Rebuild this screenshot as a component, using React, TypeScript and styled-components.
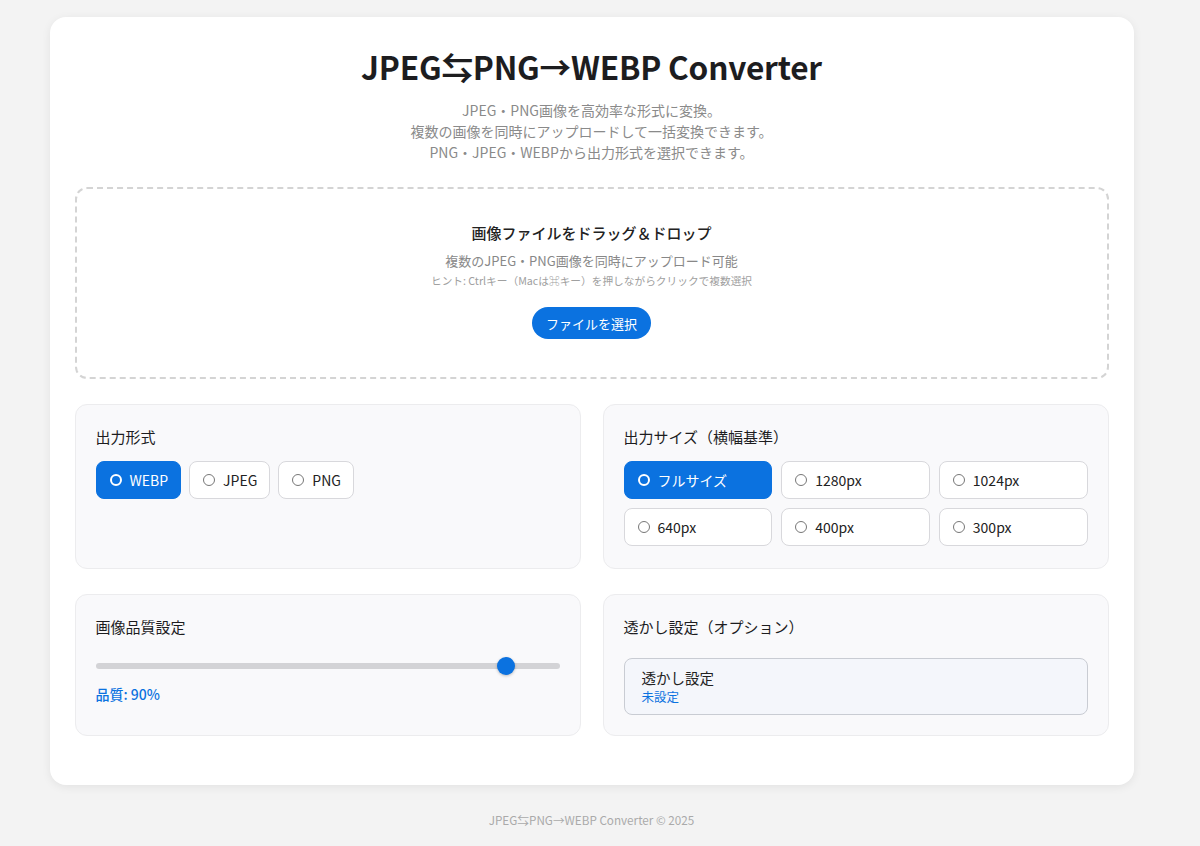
import React, { useState } from "react";
import styled, { createGlobalStyle } from "styled-components";

const BLUE = "#0b72e0";

const GlobalStyle = createGlobalStyle`
  html, body { margin: 0; padding: 0; background: #f3f3f3; }
  body {
    font-family: "Noto Sans CJK JP", "Noto Sans", sans-serif;
    color: #222;
  }
  * { box-sizing: border-box; }
`;

const Page = styled.div`
  width: 1183px;
  padding-top: 17px;
`;

const Card = styled.main`
  width: 1084px;
  margin: 0 auto;
  background: #fff;
  border-radius: 16px;
  box-shadow: 0 2px 10px rgba(0, 0, 0, 0.07);
  padding: 28px 25px 49px;
`;

const Header = styled.header`
  display: flex;
  flex-direction: column;
  align-items: center;
  text-align: center;
`;

const Title = styled.h1`
  margin: 0;
  font-size: 31.6px;
  font-weight: 700;
  line-height: 42px;
  color: #1d1d1f;
  letter-spacing: -0.2px;
`;

const Subtitle = styled.p`
  margin: 13px 0 0;
  font-size: 14px;
  line-height: 21px;
  color: #8a8a8a;
`;

const DropZone = styled.section`
  margin-top: 24px;
  height: 192px;
  border: 2px dashed #d4d4d4;
  border-radius: 12px;
  padding-bottom: 5px;
  display: flex;
  flex-direction: column;
  align-items: center;
  justify-content: center;
  text-align: center;
`;

const DropTitle = styled.div`
  font-size: 15px;
  font-weight: 500;
  color: #222;
  line-height: 22px;
`;

const DropText = styled.div`
  margin-top: 7px;
  font-size: 13px;
  color: #888;
  line-height: 20px;
`;

const DropHint = styled.div`
  margin-top: 2px;
  font-size: 10.7px;
  color: #a0a0a0;
  line-height: 16px;
`;

const SelectButton = styled.button`
  margin-top: 18px;
  height: 32px;
  padding: 0 14px;
  border: none;
  border-radius: 16px;
  background: ${BLUE};
  color: #fff;
  font-family: inherit;
  font-size: 13px;
  font-weight: 400;
`;

const Grid = styled.div`
  margin-top: 25px;
  display: grid;
  grid-template-columns: 1fr 1fr;
  column-gap: 22px;
  row-gap: 25px;
`;

const Panel = styled.section<{ $h: number }>`
  height: ${(p) => p.$h}px;
  background: #f9f9fb;
  border: 1px solid #ececee;
  border-radius: 12px;
  padding: 21px 20px 20px;
`;

const PanelTitle = styled.h2`
  margin: 0;
  font-size: 15px;
  font-weight: 400;
  line-height: 22px;
  color: #1d1d1f;
`;

const OptionRow = styled.div`
  margin-top: 13px;
  display: flex;
  gap: 8px;
`;

const OptionGrid = styled.div`
  margin-top: 13px;
  display: grid;
  grid-template-columns: repeat(3, 1fr);
  gap: 9px;
`;

const Option = styled.button<{ $active: boolean }>`
  height: 38px;
  display: flex;
  align-items: center;
  gap: 8px;
  padding: 0 12px 0 13px;
  border-radius: 8px;
  border: 1px solid ${(p) => (p.$active ? BLUE : "#d8d8dc")};
  background: ${(p) => (p.$active ? BLUE : "#fff")};
  color: ${(p) => (p.$active ? "#fff" : "#222")};
  font-family: inherit;
  font-size: 14px;
  font-weight: 400;
  cursor: pointer;
`;

const Radio = styled.span<{ $active: boolean }>`
  width: 12px;
  height: 12px;
  border-radius: 50%;
  border: ${(p) => (p.$active ? "2px solid #fff" : "1px solid #777")};
  background: ${(p) => (p.$active ? "transparent" : "#fff")};
  flex: none;
`;

const Slider = styled.input`
  -webkit-appearance: none;
  appearance: none;
  display: block;
  width: 100%;
  margin: 19px 0 0;
  height: 18px;
  background: transparent;
  &::-webkit-slider-runnable-track {
    height: 6px;
    border-radius: 3px;
    background: #d3d3d6;
  }
  &::-webkit-slider-thumb {
    -webkit-appearance: none;
    width: 18px;
    height: 18px;
    margin-top: -6px;
    border-radius: 50%;
    background: ${BLUE};
    box-shadow: 0 1px 3px rgba(0, 0, 0, 0.25);
  }
`;

const Quality = styled.div`
  margin-top: 9px;
  font-size: 14px;
  font-weight: 500;
  color: ${BLUE};
  line-height: 20px;
`;

const WatermarkBox = styled.div`
  margin-top: 20px;
  height: 57px;
  border: 1px solid #c9ccd3;
  border-radius: 8px;
  background: #f4f6fb;
  padding: 9px 17px;
  display: flex;
  flex-direction: column;
`;

const WatermarkLabel = styled.span`
  font-size: 14.5px;
  line-height: 20px;
  color: #222;
`;

const WatermarkState = styled.span`
  font-size: 12.5px;
  line-height: 18px;
  color: ${BLUE};
`;

const Footer = styled.footer`
  padding: 26px 0 20px;
  text-align: center;
  font-size: 11.7px;
  color: #aaa;
`;

const formats = ["WEBP", "JPEG", "PNG"];
const sizes = ["フルサイズ", "1280px", "1024px", "640px", "400px", "300px"];

export default function App() {
  const [format, setFormat] = useState("WEBP");
  const [size, setSize] = useState("フルサイズ");
  const [quality, setQuality] = useState(90);

  return (
    <>
      <GlobalStyle />
      <Page>
        <Card>
          <Header>
            <Title>JPEG⇆PNG→WEBP Converter</Title>
            <Subtitle>
              JPEG・PNG画像を高効率な形式に変換。
              <br />
              複数の画像を同時にアップロードして一括変換できます。
              <br />
              PNG・JPEG・WEBPから出力形式を選択できます。
            </Subtitle>
          </Header>

          <DropZone>
            <DropTitle>画像ファイルをドラッグ＆ドロップ</DropTitle>
            <DropText>複数のJPEG・PNG画像を同時にアップロード可能</DropText>
            <DropHint>ヒント: Ctrlキー（Macは⌘キー）を押しながらクリックで複数選択</DropHint>
            <SelectButton>ファイルを選択</SelectButton>
          </DropZone>

          <Grid>
            <Panel $h={165}>
              <PanelTitle>出力形式</PanelTitle>
              <OptionRow>
                {formats.map((f) => (
                  <Option key={f} $active={f === format} onClick={() => setFormat(f)}>
                    <Radio $active={f === format} />
                    {f}
                  </Option>
                ))}
              </OptionRow>
            </Panel>
            <Panel $h={165}>
              <PanelTitle>出力サイズ（横幅基準）</PanelTitle>
              <OptionGrid>
                {sizes.map((s) => (
                  <Option key={s} $active={s === size} onClick={() => setSize(s)}>
                    <Radio $active={s === size} />
                    {s}
                  </Option>
                ))}
              </OptionGrid>
            </Panel>
            <Panel $h={142}>
              <PanelTitle>画像品質設定</PanelTitle>
              <Slider
                type="range"
                min={0}
                max={100}
                value={quality}
                onChange={(e) => setQuality(Number(e.target.value))}
              />
              <Quality>品質: {quality}%</Quality>
            </Panel>
            <Panel $h={142}>
              <PanelTitle>透かし設定（オプション）</PanelTitle>
              <WatermarkBox>
                <WatermarkLabel>透かし設定</WatermarkLabel>
                <WatermarkState>未設定</WatermarkState>
              </WatermarkBox>
            </Panel>
          </Grid>
        </Card>
        <Footer>JPEG⇆PNG→WEBP Converter © 2025</Footer>
      </Page>
    </>
  );
}
